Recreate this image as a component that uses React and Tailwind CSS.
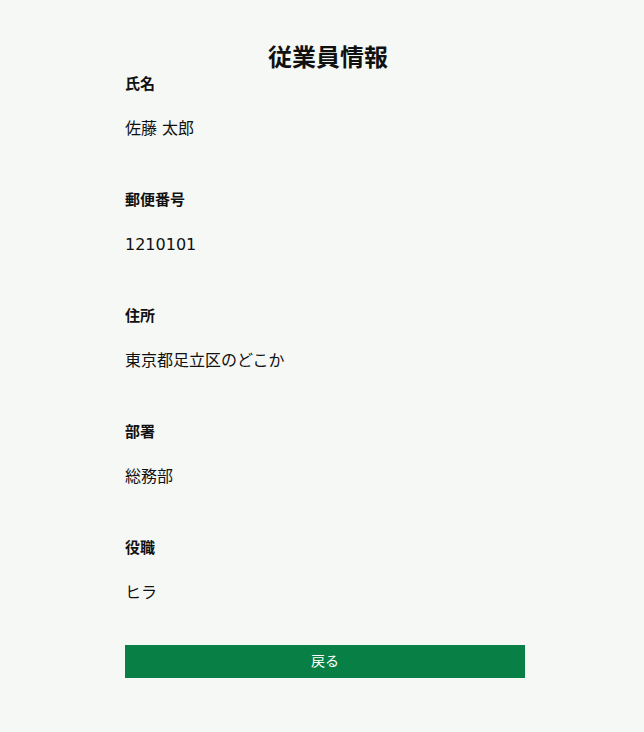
import React from 'react';

const fields = [
  { label: '氏名', value: '佐藤 太郎' },
  { label: '郵便番号', value: '1210101' },
  { label: '住所', value: '東京都足立区のどこか' },
  { label: '部署', value: '総務部' },
  { label: '役職', value: 'ヒラ' },
];

const App = () => {
  return (
    <div
      className="min-h-screen w-full bg-[#f6f8f6] text-[#111111]"
      style={{ fontFamily: '"DejaVu Sans", "Noto Sans CJK JP", sans-serif' }}
    >
      <div className="ml-[125px] w-[400px] pt-[42px]">
        <h1 className="w-[406px] text-center text-[24px] font-bold leading-[32px] -mb-[2px]">従業員情報</h1>

        {fields.map((f) => (
          <div key={f.label} className="mb-[47px]">
            <div className="text-[15px] font-bold leading-[24px]">{f.label}</div>
            <div className="mt-[21px] text-[16px] leading-[24px]">{f.value}</div>
          </div>
        ))}

        <button className="-mt-[7px] flex h-[33px] w-[400px] items-center justify-center bg-[#088045] text-[14px] text-white">
          戻る
        </button>
      </div>
    </div>
  );
};

export default App;
